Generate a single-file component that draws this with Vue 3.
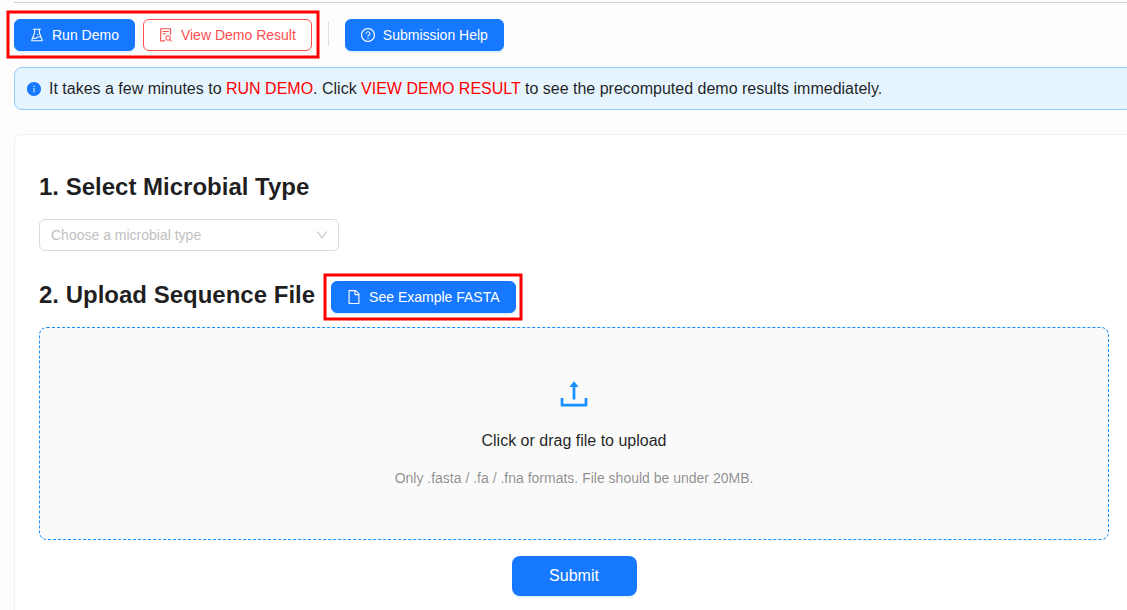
<script setup>
const icons = {
  experiment:
    'M512 472a40 40 0 1080 0 40 40 0 10-80 0zm367 352.9L696.3 352V178H768v-68H256v68h71.7v174L145 824.9c-2.8 7.4-4.3 15.2-4.3 23.1 0 35.3 28.7 64 64 64h614.6c7.9 0 15.7-1.5 23.1-4.3 33-12.7 49.4-49.8 36.6-82.8zM395.7 364.7V180h232.6v184.7L719.2 600c-20.7-5.3-42.1-8-63.9-8-61.2 0-119.2 21.5-165.3 60a188.78 188.78 0 01-121.3 43.9c-32.7 0-64.1-8.3-91.8-23.7l118.8-307.5zM210.5 844l41.7-107.8c35.7 18.1 75.4 27.8 116.6 27.8 61.2 0 119.2-21.5 165.3-60 33.9-28.2 76.3-43.9 121.3-43.9 35 0 68.4 9.5 97.6 27.1L813.5 844h-603z',
  fileSearch:
    'M688 312v-48c0-4.4-3.6-8-8-8H296c-4.4 0-8 3.6-8 8v48c0 4.4 3.6 8 8 8h384c4.4 0 8-3.6 8-8zm-392 88c-4.4 0-8 3.6-8 8v48c0 4.4 3.6 8 8 8h184c4.4 0 8-3.6 8-8v-48c0-4.4-3.6-8-8-8H296zm144 452H208V148h560v344c0 4.4 3.6 8 8 8h56c4.4 0 8-3.6 8-8V108c0-17.7-14.3-32-32-32H168c-17.7 0-32 14.3-32 32v784c0 17.7 14.3 32 32 32h272c4.4 0 8-3.6 8-8v-56c0-4.4-3.6-8-8-8zm445.7 51.5l-93.3-93.3C814.7 780.7 828 743.9 828 704c0-97.2-78.8-176-176-176s-176 78.8-176 176 78.8 176 176 176c35.8 0 69-10.7 96.8-29l94.7 94.7c1.6 1.6 3.6 2.3 5.6 2.3s4.1-.8 5.6-2.3l31-31a7.9 7.9 0 000-11.2zM652 816c-61.9 0-112-50.1-112-112s50.1-112 112-112 112 50.1 112 112-50.1 112-112 112z',
  question:
    'M512 64C264.6 64 64 264.6 64 512s200.6 448 448 448 448-200.6 448-448S759.4 64 512 64zm0 820c-205.4 0-372-166.6-372-372s166.6-372 372-372 372 166.6 372 372-166.6 372-372 372zM623.6 316.7C593.6 290.4 554 276 512 276s-81.6 14.5-111.6 40.7C369.2 344 352 380.7 352 420v7.6c0 4.4 3.6 8 8 8h48c4.4 0 8-3.6 8-8V420c0-44.1 43.1-80 96-80s96 35.9 96 80c0 31.1-22 59.6-56.1 72.7-21.2 8.1-39.2 22.3-52.1 40.9-13.1 19-19.9 41.8-19.9 64.9V620c0 4.4 3.6 8 8 8h48c4.4 0 8-3.6 8-8v-22.7a48.3 48.3 0 0130.9-44.8c59-22.7 97.1-74.7 97.1-132.5.1-39.3-17.1-76-48.3-103.3zM472 732a40 40 0 1080 0 40 40 0 10-80 0z',
  info:
    'M512 64C264.6 64 64 264.6 64 512s200.6 448 448 448 448-200.6 448-448S759.4 64 512 64zm32 664c0 4.4-3.6 8-8 8h-48c-4.4 0-8-3.6-8-8V456c0-4.4 3.6-8 8-8h48c4.4 0 8 3.6 8 8v272zm-32-344a48.01 48.01 0 010-96 48.01 48.01 0 010 96z',
  down:
    'M884 256h-75c-5.1 0-9.9 2.5-12.9 6.6L512 654.2 227.9 262.6c-3-4.1-7.8-6.6-12.9-6.6h-75c-6.5 0-10.3 7.4-6.5 12.7l352.6 486.1c12.8 17.6 39 17.6 51.7 0l352.6-486.1c3.9-5.3.1-12.7-6.4-12.7z',
  file:
    'M854.6 288.6L639.4 73.4c-6-6-14.1-9.4-22.6-9.4H192c-17.7 0-32 14.3-32 32v832c0 17.7 14.3 32 32 32h640c17.7 0 32-14.3 32-32V311.3c0-8.5-3.4-16.7-9.4-22.7zM790.2 326H602V137.8L790.2 326zm1.8 562H232V136h302v216a42 42 0 0042 42h216v494z',
  upload:
    'M400 317.7h73.9V656c0 4.4 3.6 8 8 8h60c4.4 0 8-3.6 8-8V317.7H624c6.7 0 10.4-7.7 6.3-12.9L518.3 163a8 8 0 00-12.6 0l-112 141.7c-4.1 5.3-.4 13 6.3 13zM878 626h-60c-4.4 0-8 3.6-8 8v154H214V634c0-4.4-3.6-8-8-8h-60c-4.4 0-8 3.6-8 8v198c0 17.7 14.3 32 32 32h684c17.7 0 32-14.3 32-32V634c0-4.4-3.6-8-8-8z',
}
</script>

<template>
  <div class="page">
    <div class="content">
      <div class="rule"></div>

      <div class="toolbar">
        <button class="btn primary">
          <svg class="icon" viewBox="64 64 896 896"><path :d="icons.experiment" /></svg>
          <span>Run Demo</span>
        </button>
        <button class="btn danger">
          <svg class="icon" viewBox="64 64 896 896"><path :d="icons.fileSearch" /></svg>
          <span>View Demo Result</span>
        </button>
        <span class="divider"></span>
        <button class="btn primary">
          <svg class="icon" viewBox="64 64 896 896"><path :d="icons.question" /></svg>
          <span>Submission Help</span>
        </button>
      </div>

      <div class="alert">
        <svg class="icon alert-icon" viewBox="64 64 896 896"><path :d="icons.info" /></svg>
        <span>It takes a few minutes to <em>RUN DEMO</em>. Click <em>VIEW DEMO RESULT</em> to see the precomputed demo results immediately.</span>
      </div>

      <section class="card">
        <h2>1. Select Microbial Type</h2>
        <div class="select">
          <span>Choose a microbial type</span>
          <svg class="arrow" viewBox="64 64 896 896"><path :d="icons.down" /></svg>
        </div>

        <div class="upload-head">
          <h2>2. Upload Sequence File</h2>
          <button class="btn primary">
            <svg class="icon" viewBox="64 64 896 896"><path :d="icons.file" /></svg>
            <span>See Example FASTA</span>
          </button>
        </div>

        <div class="dragger">
          <svg class="upload-icon" viewBox="64 64 896 896"><path :d="icons.upload" /></svg>
          <p class="drag-title">Click or drag file to upload</p>
          <p class="drag-hint">Only .fasta / .fa / .fna formats. File should be under 20MB.</p>
        </div>

        <button class="submit">Submit</button>
      </section>
    </div>

    <svg class="marks" width="1127" height="610">
      <rect x="8" y="12" width="310" height="45" />
      <rect x="325" y="275" width="196" height="44" />
    </svg>
  </div>
</template>

<style>
body {
  margin: 0;
  background: #fdfdfd;
}
</style>

<style scoped>
.page {
  position: relative;
  box-sizing: border-box;
  height: 610px;
  overflow: hidden;
  padding: 2px 0 0 14px;
  background: #fdfdfd;
  font-family: "Liberation Sans", Arial, sans-serif;
  font-size: 14px;
  color: rgba(0, 0, 0, 0.88);
}
.page * {
  box-sizing: border-box;
}
.content {
  width: 1120px;
}
.rule {
  height: 1px;
  background: #d0d0d0;
}
.toolbar {
  display: flex;
  align-items: center;
  margin-top: 16px;
  gap: 8px;
}
.btn {
  display: flex;
  align-items: center;
  gap: 8px;
  height: 32px;
  padding: 0 15px;
  border: 1px solid transparent;
  border-radius: 6px;
  font: 14px/22px "Liberation Sans", Arial, sans-serif;
  white-space: nowrap;
}
.icon {
  flex: none;
  width: 14px;
  height: 14px;
  fill: currentColor;
}
.primary {
  background: #1677ff;
  border-color: #1677ff;
  color: #fff;
  box-shadow: 0 2px 0 rgba(5, 145, 255, 0.1);
}
.danger {
  background: #fff;
  border-color: #ff4d4f;
  color: #ff4d4f;
  box-shadow: 0 2px 0 rgba(0, 0, 0, 0.02);
}
.divider {
  width: 1px;
  height: 24px;
  margin: 0 8px 2px;
  background: #e0e0e0;
}
.alert {
  display: flex;
  align-items: center;
  height: 43px;
  margin-top: 16px;
  padding: 0 12px;
  border: 1px solid #91caff;
  border-radius: 8px;
  background: #e6f4ff;
  font-size: 16px;
  white-space: nowrap;
}
.alert em {
  color: #f00;
  font-style: normal;
}
.alert-icon {
  margin-right: 8px;
  color: #1677ff;
}
.card {
  height: 600px;
  margin-top: 24px;
  padding: 36px 24px 0;
  border: 1px solid #f0f0f0;
  border-radius: 8px;
  background: #fff;
}
h2 {
  margin: 0;
  font-size: 24px;
  line-height: 32px;
  font-weight: 700;
}
.select {
  display: flex;
  align-items: center;
  justify-content: space-between;
  width: 300px;
  height: 32px;
  margin-top: 16px;
  padding: 0 10px 0 11px;
  border: 1px solid #d9d9d9;
  border-radius: 6px;
  color: #bfbfbf;
}
.arrow {
  width: 12px;
  height: 12px;
  fill: #bfbfbf;
}
.upload-head {
  display: flex;
  align-items: flex-start;
  gap: 16px;
  height: 34px;
  margin-top: 28px;
}
.upload-head .btn {
  margin-top: 2px;
}
.dragger {
  display: flex;
  flex-direction: column;
  align-items: center;
  height: 213px;
  margin-top: 14px;
  padding-top: 50px;
  border: 1px dashed #1890ff;
  border-radius: 8px;
  background: #fafafa;
}
.upload-icon {
  width: 32px;
  height: 32px;
  fill: #1890ff;
}
.drag-title {
  margin: 19px 0 0;
  font-size: 16px;
  line-height: 24px;
}
.drag-hint {
  margin: 14px 0 0;
  line-height: 22px;
  color: rgba(0, 0, 0, 0.45);
}
.submit {
  display: block;
  width: 125px;
  height: 40px;
  margin: 16px auto 0;
  padding: 0;
  border: 0;
  border-radius: 8px;
  background: #1677ff;
  color: #fff;
  box-shadow: 0 2px 0 rgba(5, 145, 255, 0.1);
  font: 16px/24px "Liberation Sans", Arial, sans-serif;
}
.marks {
  position: absolute;
  top: 0;
  left: 0;
  pointer-events: none;
}
.marks rect {
  fill: none;
  stroke: #f00;
  stroke-width: 3;
}
</style>
